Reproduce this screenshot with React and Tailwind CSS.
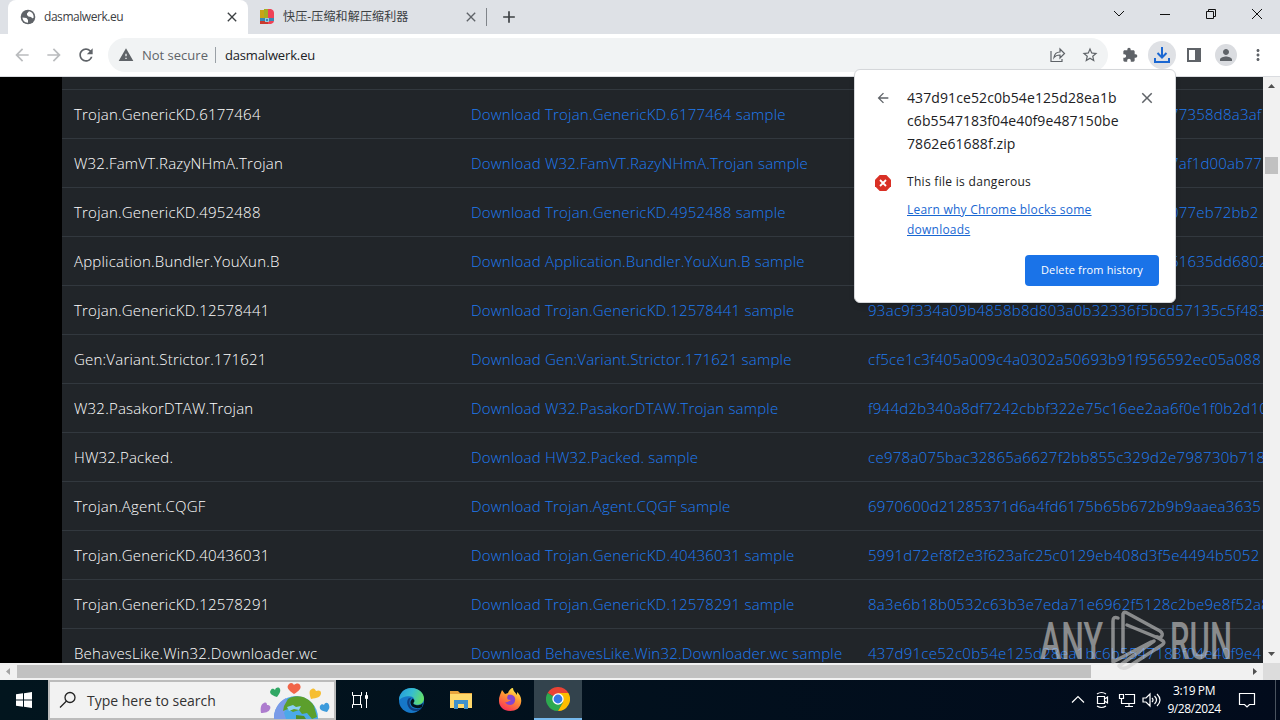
import React from "react";
import {
  MdArrowBack,
  MdArrowForward,
  MdRefresh,
  MdWarning,
  MdStarBorder,
  MdExtension,
  MdPerson,
  MdMoreVert,
  MdPublic,
  MdClose,
  MdAdd,
} from "react-icons/md";

const rows = [
  { name: "Trojan.GenericKD.6177464", hash: "77358d8a3af", clipped: true },
  { name: "W32.FamVT.RazyNHmA.Trojan", hash: "7af1d00ab77", clipped: true },
  { name: "Trojan.GenericKD.4952488", hash: "077eb72bb2", clipped: true },
  { name: "Application.Bundler.YouXun.B", hash: "61635dd6802", clipped: true },
  { name: "Trojan.GenericKD.12578441", hash: "93ac9f334a09b4858b8d803a0b32336f5bcd57135c5f483" },
  { name: "Gen:Variant.Strictor.171621", hash: "cf5ce1c3f405a009c4a0302a50693b91f956592ec05a088" },
  { name: "W32.PasakorDTAW.Trojan", hash: "f944d2b340a8df7242cbbf322e75c16ee2aa6f0e1f0b2d10" },
  { name: "HW32.Packed.", hash: "ce978a075bac32865a6627f2bb855c329d2e798730b718" },
  { name: "Trojan.Agent.CQGF", hash: "6970600d21285371d6a4fd6175b65b672b9b9aaea3635" },
  { name: "Trojan.GenericKD.40436031", hash: "5991d72ef8f2e3f623afc25c0129eb408d3f5e4494b5052" },
  { name: "Trojan.GenericKD.12578291", hash: "8a3e6b18b0532c63b3e7eda71e6962f5128c2be9e8f52a8" },
  { name: "BehavesLike.Win32.Downloader.wc", hash: "437d91ce52c0b54e125d28ea1bc6b5547183f04e40f9e4" },
];

const TabStrip = () => (
  <div className="flex h-[34px] shrink-0 bg-[#dee1e6] pl-2 text-[12px] text-[#3c4043]">
    <div className="flex w-60 items-center rounded-t-lg bg-white pl-3">
      <svg viewBox="0 0 16 16" className="size-4">
        <circle cx="8" cy="8" r="7.300" fill="#5f6368" />
        <path d="M2.500 8.500l4 .5 1.500 2v2.800C4.500 13.500 2.500 11 2.500 8.500zM7 4.500L9 2.300c3 .5 4.800 3 4.700 6.200-1 1.500-1.700.5-2.700-.5L8.500 7.500 7 6z" fill="#fff" />
      </svg>
      <span className="ml-2 flex-1 tracking-[-0.45px]">dasmalwerk.eu</span>
      <MdClose className="mr-2 size-4 text-[#3c4043]" />
    </div>
    <div className="flex w-[238px] items-center pl-[11px]">
      <svg viewBox="0 0 16 16" className="size-4">
        <path d="M1 1h4v14H1z" fill="#c8a415" />
        <path d="M5 0h4v15H5z" fill="#a5ad22" />
        <path d="M9 0h3q3 1 3 4v8q0 2-3 3H9z" fill="#ef4257" />
        <path d="M1 9h14v3H1z" fill="#3789b5" />
        <path d="M1 12h8v3H1z" fill="#c93b30" />
        <path d="M6 9h4v4H6z" fill="#9cc8dc" />
        <path d="M7 10h2v2H7z" fill="#3789b5" />
      </svg>
      <span className="ml-2 flex-1 whitespace-nowrap tracking-[0.15px]">快压-压缩和解压缩利器</span>
      <MdClose className="mr-[7px] size-4 text-[#5f6368]" />
    </div>
    <div className="mt-2 h-[18px] w-px bg-[#80848a]" />
    <MdAdd className="ml-3 mt-[7px] size-5 text-[#3c4043]" />
    <div className="ml-auto flex text-[#111]">
      <svg viewBox="0 0 46 34" className="h-[34px] w-[46px] fill-none stroke-current">
        <path d="M18 11l5 5 5-5" />
      </svg>
      <svg viewBox="0 0 46 34" className="h-[34px] w-[46px] fill-none stroke-current">
        <path d="M18 14.500h10" />
      </svg>
      <svg viewBox="0 0 46 34" className="h-[34px] w-[46px] fill-none stroke-current">
        <path d="M18.500 11.500h7v7h-7zM20.500 11.500v-2h7v7h-2" />
      </svg>
      <svg viewBox="0 0 46 34" className="h-[34px] w-[46px] fill-none stroke-current">
        <path d="M18 9l10 10M28 9L18 19" />
      </svg>
    </div>
  </div>
);

const Toolbar = () => (
  <div className="flex h-[43px] shrink-0 items-center border-b border-[#dadce0] bg-white text-[#5f6368]">
    <MdArrowBack className="ml-3 size-5 text-[#babcbe]" />
    <MdArrowForward className="ml-3 size-5 text-[#babcbe]" />
    <MdRefresh className="ml-3 size-5" />
    <div className="ml-3 flex h-[34px] w-[1000px] items-center rounded-full bg-[#f1f3f4] pl-[10px] text-[13px]">
      <MdWarning className="size-4" />
      <span className="ml-2 pt-px">Not secure</span>
      <div className="ml-[7px] h-4 w-px bg-[#9aa0a6]" />
      <span className="ml-[9px] pt-px tracking-[-0.15px] text-[#202124]">dasmalwerk.eu</span>
      <svg viewBox="0 0 18 18" className="ml-auto size-[18px] fill-none stroke-current stroke-[1.2]">
        <path d="M2 5v10.500h11V13M5 11.500c.5-4 2.500-5.500 6-5.500V3l4.500 4.500L11 12V9c-3 0-4.700.8-6 2.500z" />
      </svg>
      <MdStarBorder className="ml-[14px] mr-[9px] size-[18px]" />
    </div>
    <MdExtension className="ml-[14px] size-4" />
    <div className="ml-[10px] flex size-7 items-center justify-center rounded-full bg-[#dfe1e5] text-[#1a67d2]">
      <svg viewBox="0 0 18 18" className="size-[18px] fill-none stroke-current stroke-2">
        <path d="M9 1v10M4.500 7L9 11.500 13.500 7M2 12v4h14v-4" />
      </svg>
    </div>
    <svg viewBox="0 0 16 16" className="ml-[10px] size-4">
      <path fill="currentColor" fillRule="evenodd" d="M1 1h14v14H1zM3 3v10h6V3z" />
    </svg>
    <div className="ml-[13px] flex size-[22px] items-center justify-center rounded-full bg-[#dadce0]">
      <MdPerson className="size-[18px]" />
    </div>
    <MdMoreVert className="ml-3 size-[18px]" />
  </div>
);

const SampleTable = () => (
  <div className="h-full flex-1 overflow-hidden bg-[#212529] text-[15px] font-light">
    <div className="h-[13px] border-b border-[#32383e]" />
    {rows.map((row) => (
      <div
        key={row.name}
        className="flex h-[49px] items-center whitespace-nowrap border-b border-[#32383e] pl-3 tracking-[0.21px] text-[#1f7cf2]"
      >
        <div className="w-[397px] shrink-0 text-white">{row.name}</div>
        <div className="w-[397px] shrink-0">Download {row.name} sample</div>
        <div className={row.clipped ? "pl-[302px]" : "tracking-[0.27px]"}>{row.hash}</div>
      </div>
    ))}
  </div>
);

const DownloadBubble = () => (
  <div className="absolute left-[854px] top-[69px] h-[234px] w-[322px] rounded-md border border-[#d5d7da] bg-white shadow-md">
    <div className="flex pl-5 pt-4">
      <MdArrowBack className="mt-1 size-4 text-[#5f6368]" />
      <div className="ml-4 w-[220px] text-[14px] leading-[23px] tracking-[0.1px] text-[#202124]">
        437d91ce52c0b54e125d28ea1b
        <br />
        c6b5547183f04e40f9e487150be
        <br />
        7862e61688f.zip
      </div>
      <MdClose className="ml-[11px] mt-[3px] size-[18px] text-[#5f6368]" />
    </div>
    <div className="mt-[17px] flex pl-5">
      <svg viewBox="0 0 16 16" className="mt-[3px] size-4">
        <path d="M4.700 0h6.600L16 4.700v6.600L11.300 16H4.700L0 11.300V4.700z" fill="#d93025" />
        <path d="M5 5l6 6M11 5l-6 6" stroke="#fff" strokeWidth="1.800" />
      </svg>
      <div className="ml-4 text-[12px] leading-5 text-[#202124]">
        <div className="tracking-[0.3px]">This file is dangerous</div>
        <a className="mt-2 block w-[210px] text-[#1967d2] underline tracking-[0.23px]">
          Learn why Chrome blocks some downloads
        </a>
      </div>
    </div>
    <button className="ml-[170px] mt-[15px] block h-[31px] w-[134px] rounded bg-[#1a73e8] text-[11px] tracking-[0.15px] text-white">
      Delete from history
    </button>
  </div>
);

const Watermark = () => (
  <svg viewBox="0 0 200 70" className="absolute left-[1036px] top-[606px] h-[70px] w-[200px] opacity-60">
    <g fill="#cfcfcf" fontFamily="Roboto" fontSize="52" fontWeight="500">
      <text x="4" y="53" textLength="63" lengthAdjust="spacingAndGlyphs">ANY</text>
      <text x="134" y="53" textLength="62" lengthAdjust="spacingAndGlyphs">RUN</text>
    </g>
    <g fill="none" stroke="#cfcfcf" strokeWidth="3.500" strokeLinejoin="round" strokeLinecap="round">
      <path d="M82 12q-5-2-5 3v41l38-20" />
      <path d="M87 46V8q1-3 4-1l33 18q4 3 1 6-2 1-5 0L91 19" />
      <path d="M121 31l6 4q2 2-1 4L92 61q-6 3-9-1l35-25" />
    </g>
  </svg>
);

const TaskbarIcons = () => (
  <>
    <div className="flex w-12 items-center justify-center">
      <svg viewBox="0 0 18 18" className="size-[18px] fill-none stroke-white">
        <path d="M1.500 1v3.500h9V1M1.500 17v-3.500h9V17M2.500 4.500h7v9h-7zM15.500 1v3M15.500 8v9" />
        <path d="M14.500 4.500h2v3h-2z" fill="#fff" />
      </svg>
    </div>
    <div className="ml-[3px] flex w-[49px] items-center justify-center">
      <svg viewBox="0 0 24 24" className="size-[25px]">
        <defs>
          <linearGradient id="edgeTop" x1="0" y1=".2" x2="1" y2=".5">
            <stop stopColor="#259bdb" />
            <stop offset=".5" stopColor="#36bdd0" />
            <stop offset="1" stopColor="#64df68" />
          </linearGradient>
        </defs>
        <circle cx="12" cy="12" r="12" fill="#1677c8" />
        <path d="M0 12C0 4 6 0 12 0c7 0 12 5 12 10 0 4-3 6-7 6-3 0-4-1-3-2 2-3 0-6-4-6C5 8 1 10 0 12z" fill="url(#edgeTop)" />
        <path d="M9 10c-3 4 0 12 7 12 3 0 5-1 6-3-6 3-12 0-12-5q0-3 2-5z" fill="#103f80" />
        <path d="M13 10q3 2 1 4-1 2 3 2.500 4 .5 6-2l-1 4q-5 2-9-.500-4-4 0-8z" fill="#02131c" />
      </svg>
    </div>
    <div className="flex w-[49px] items-center justify-center">
      <svg viewBox="0 0 22 20" className="h-5 w-[22px]">
        <path d="M0 1h8l2 2h12v4H0z" fill="#e8a33d" />
        <path d="M0 4h22v14H0z" fill="#ffd86b" />
        <path d="M4 10h14v9h-4v-5H8v5H4z" fill="#3f91cc" />
      </svg>
    </div>
    <div className="flex w-[49px] items-center justify-center">
      <svg viewBox="0 0 24 24" className="size-6">
        <defs>
          <linearGradient id="fox" x1=".8" y1="0" x2=".3" y2="1">
            <stop stopColor="#fff44f" />
            <stop offset=".45" stopColor="#ff9533" />
            <stop offset="1" stopColor="#fa2f58" />
          </linearGradient>
        </defs>
        <path d="M2 7l2-5 3 4 3-1c1-3 3-5 5-5 0 3 2 4 4 7V4c3 3 5 6 4 11-1 5-5 8-11 8S1 19 1 13q0-4 1-6z" fill="url(#fox)" />
        <path d="M10 7c5-1 8 2 7 6-1 5-8 5-10 1 3 1 4-1 6-2-3 0-5-1-3-5z" fill="#8544cf" />
      </svg>
    </div>
    <div className="flex w-12 items-center justify-center border-b-2 border-[#76b9ed] bg-[#33434d]">
      <svg viewBox="0 0 24 24" className="size-6">
        <path d="M12 12L1.600 6A12 12 0 0122.400 6z" fill="#e94335" />
        <path d="M12 12L1.600 6A12 12 0 0012 24l5.200-9z" fill="#2da94f" />
        <path d="M22.400 6A12 12 0 0112 24l5.200-9L12 6z" fill="#fdbd00" />
        <circle cx="12" cy="12" r="5.700" fill="#fff" />
        <circle cx="12" cy="12" r="4.400" fill="#3578e5" />
      </svg>
    </div>
  </>
);

const SearchBox = () => (
  <div className="flex w-[288px] items-center border-2 border-[#bcbcbc] bg-[#f2f2f2] pl-[9px]">
    <svg viewBox="0 0 18 18" className="size-[18px] fill-none stroke-[#222] stroke-[1.3]">
      <circle cx="11" cy="6.500" r="5" />
      <path d="M7.500 10L1 16.500" />
    </svg>
    <span className="ml-[10px] text-[14px] text-[#333]">Type here to search</span>
    {/* earth with hearts around it */}
    <svg viewBox="0 0 70 37" className="ml-auto mr-1 h-[37px] w-[70px]">
      <circle cx="36" cy="36" r="22" fill="#4ba9e9" />
      <path d="M14 37a22 22 0 0112-21l2 8-4 7 2 6z" fill="#7a9be8" />
      <path d="M28 17c8-5 20-3 26 7l3 11-5 2-5-6-5 1-3-4-6 2-5-3-5 2 1-5z" fill="#5c9f2c" />
      <path d="M27 25l6-2 3 2 5-1-2 4-5-1-5 2z" fill="#8acff4" />
      <path d="M36 33l8 1 2 3H36z" fill="#4f8f2a" />
      <path d="M34 12c-6-4-8-7-5-10 2-2 4-1 5 1 2-2 5-2 6 0 2 3-1 6-6 9z" fill="#f26549" />
      <path d="M17 15C10 13 9 10 11 8c1-2 3-1 4 0 1-3 4-3 5-1 1 3-1 5-3 8z" fill="#31a765" />
      <path d="M51 17c-2-6-2-9 1-10 2-1 3 0 4 2 2-1 5-1 5 2 0 4-4 5-10 6z" fill="#f6be32" />
      <path d="M1 31c-1-5 0-9 3-10 2-1 3 0 3 2 3 0 4 2 3 4-1 3-5 4-9 4z" fill="#ad7cce" />
      <path d="M67 30c-6-1-8-3-7-6 1-2 3-2 4-1 1-3 4-3 5 0s0 4-2 7z" fill="#3c9bdc" />
    </svg>
  </div>
);

const Taskbar = () => (
  <div className="flex h-10 shrink-0 bg-gradient-to-r from-[#02151e] to-[#020b1c] text-white">
    <div className="flex w-12 items-center justify-center">
      <svg viewBox="0 0 16 16" className="size-4">
        <path d="M0 2.300L7 1.300V7.500H0zM8 1.200L16 0V7.500H8zM0 8.500h7v6.200L0 13.700zM8 8.500h8V16l-8-1.200z" fill="#fff" />
      </svg>
    </div>
    <SearchBox />
    <TaskbarIcons />
    <div className="ml-auto flex items-center">
      <svg viewBox="0 0 96 20" className="h-5 w-24 fill-none stroke-white stroke-[1.2]">
        <path d="M5 12.500l6-6 6 6" />
        <path d="M30.500 6.500h7v7h-7zM37.500 9l3-2v6l-3-2M30 4q4.500-3 9 0M30 16q4.500 3 9 0" />
        <path d="M58 4.500h9.500v9H54M62 13.500v3M58 16.500h8M52.500 4.500h4v4h-4zM54.500 8.500v5" />
        <path d="M76 8h3l4-4v12l-4-4h-3zM85 8q2 2 0 4M87.500 6q4 4 0 8M90 4q6 6 0 12" />
      </svg>
      <div className="-ml-[3px] w-[68px] text-center text-[12px] leading-[18px] tracking-[-0.4px]">
        <div>3:19 PM</div>
        <div>9/28/2024</div>
      </div>
      <svg viewBox="0 0 18 18" className="ml-[10px] size-[18px] fill-none stroke-white stroke-[1.2]">
        <path d="M1.500 2.500h15v11h-5L9 16l-2.500-2.500h-5z" />
      </svg>
      <div className="ml-[19px] mr-1 h-10 w-px bg-[#4a535f]" />
    </div>
  </div>
);

const App = () => {
  return (
    <div className="relative flex h-[720px] w-[1280px] flex-col overflow-hidden bg-black font-['Open_Sans','Noto_Sans_CJK_SC',sans-serif]">
      <TabStrip />
      <Toolbar />
      <div className="flex h-[586px] shrink-0">
        <div className="w-[62px] shrink-0 bg-black" />
        <SampleTable />
        <div className="flex w-[17px] shrink-0 flex-col items-center bg-[#f1f1f1]">
          <svg viewBox="0 0 17 17" className="size-[17px]">
            <path d="M5 11l3.500-4 3.500 4z" fill="#505050" />
          </svg>
          <div className="mt-[63px] h-[17px] w-[13px] bg-[#c1c1c1]" />
          <svg viewBox="0 0 17 17" className="mt-auto size-[17px]">
            <path d="M5 6l3.500 4L12 6z" fill="#505050" />
          </svg>
        </div>
      </div>
      <div className="flex h-[17px] shrink-0 items-center bg-[#f1f1f1]">
        <svg viewBox="0 0 17 17" className="size-[17px]">
          <path d="M10 5L6 8.500l4 3.500z" fill="#a3a3a3" />
        </svg>
        <div className="h-[13px] w-[1074px] bg-[#c1c1c1]" />
        <svg viewBox="0 0 17 17" className="ml-auto size-[17px]">
          <path d="M7 5l4 3.500L7 12z" fill="#505050" />
        </svg>
        <div className="h-[17px] w-[17px] bg-[#dcdcdc]" />
      </div>
      <Taskbar />
      <DownloadBubble />
      <Watermark />
    </div>
  );
};

export default App;
